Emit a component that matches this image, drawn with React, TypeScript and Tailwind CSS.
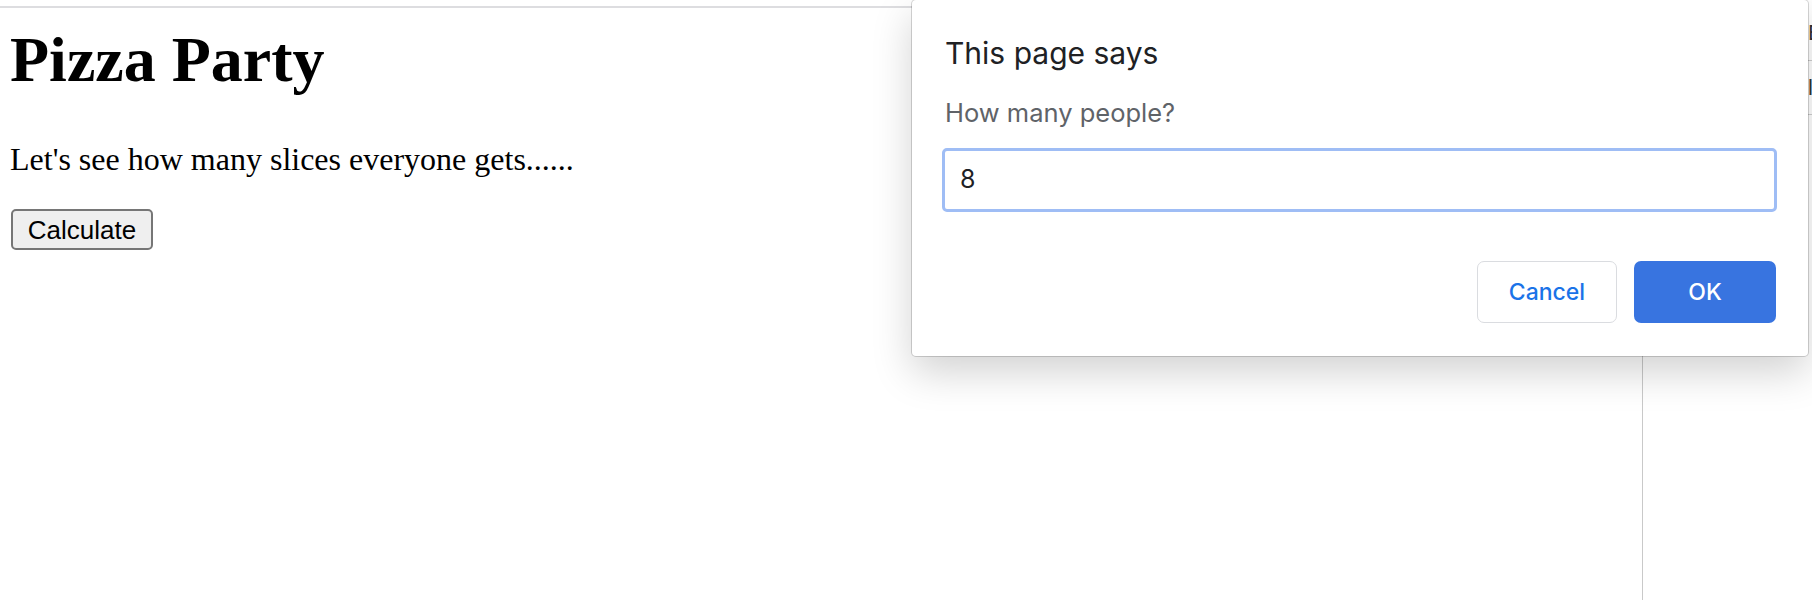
import React from 'react';

const sans = "font-['Inter','Noto_Sans',sans-serif]";

const PromptDialog = () => {
  return (
    <div
      className={`absolute left-[912px] top-0 w-[896px] rounded-[4px] bg-white pt-[35px] pr-[31px] pb-[33px] pl-[30px] shadow-[0_0_0_1px_rgba(0,0,0,0.16),0_16px_40px_rgba(0,0,0,0.18)] ${sans}`}
    >
      <h2 className="pl-[3px] text-[30px] leading-[36px] text-[#202124]">This page says</h2>
      <p className="mt-[26px] pl-[3px] text-[25.5px] leading-[32px] text-[#5f6368]">How many people?</p>
      <div className="mt-[19px] flex h-[64px] items-center rounded-[5px] border-[3px] border-[#9fbdf5] pl-[15px] text-[25px] text-[#202124]">
        8
      </div>
      <div className="mt-[49px] flex justify-end gap-[17px] pr-px">
        <button className="flex h-[62px] w-[140px] items-center justify-center rounded-[7px] border border-[#dadce0] bg-white text-[23px] font-medium text-[#1a73e8]">
          Cancel
        </button>
        <button className="flex h-[62px] w-[142px] items-center justify-center rounded-[7px] bg-[#3874e0] text-[23px] font-medium text-white">
          OK
        </button>
      </div>
    </div>
  );
};

const App = () => {
  return (
    <div className="relative h-[600px] w-[1812px] overflow-hidden bg-white">
      <div className="flex h-full">
        {/* page under the prompt */}
        <div className="w-[1643px] border-r border-[#c9c9c9]">
          <div className="mt-[6px] h-[2px] bg-[#dddde0]" />
          <div className="pl-[10px] font-['Liberation_Serif','Times_New_Roman',serif] text-black">
            <h1 className="mt-[20px] text-[64px] font-bold leading-[64px]">Pizza Party</h1>
            <p className="mt-[51px] text-[32px] leading-[32px]">Let's see how many slices everyone gets......</p>
            <button className="mt-[34px] ml-px flex h-[41px] w-[142px] items-center justify-center rounded-[5px] border-2 border-[#767676] bg-[#efefef] font-['Liberation_Sans',Arial,sans-serif] text-[26px] leading-none">
              Calculate
            </button>
          </div>
        </div>
        {/* side panel edge */}
        <div className="flex flex-1 justify-end">
          <div className="w-[4px] overflow-hidden">
            <div className="flex h-[61px] items-center border-b border-[#cfcfcf] pt-[6px] font-['Liberation_Sans',sans-serif] text-[22px] leading-none text-[#333]">
              E
            </div>
            <div className="flex h-[54px] items-center border-b border-[#cfcfcf] font-['Liberation_Sans',sans-serif] text-[22px] leading-none text-[#333]">
              l
            </div>
          </div>
        </div>
      </div>
      <PromptDialog />
    </div>
  );
};

export default App;
